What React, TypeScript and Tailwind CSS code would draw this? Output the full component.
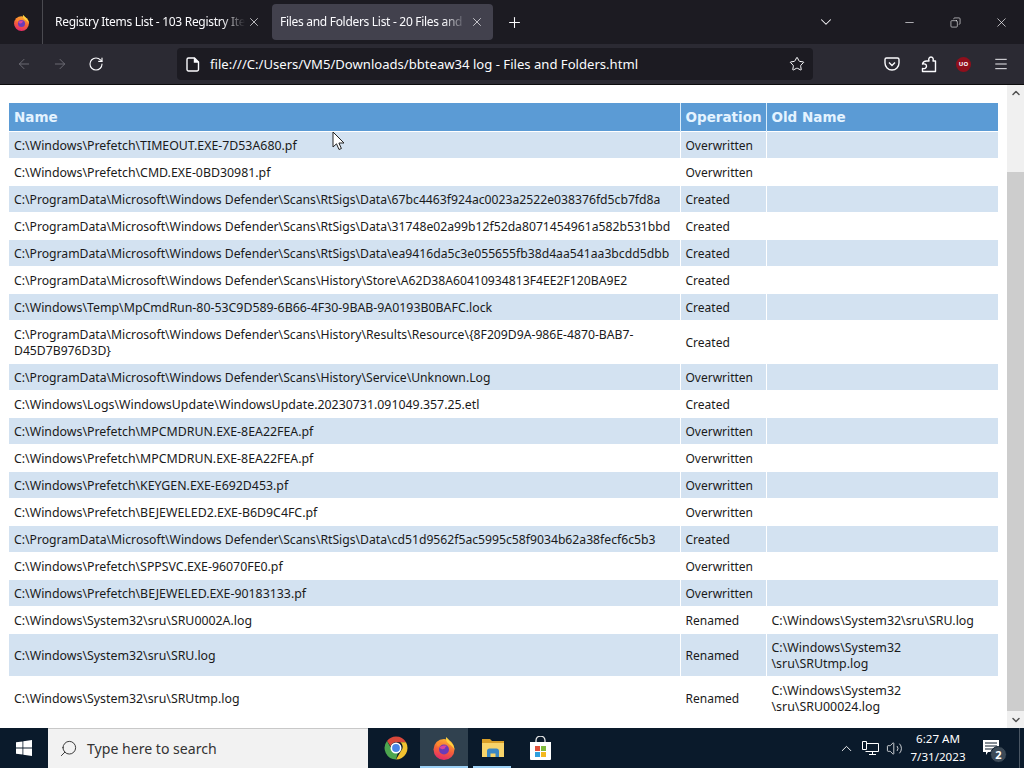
import { ArrowLeft, ArrowRight, ChevronDown, ChevronUp, Copy, Menu, Minus, Plus, RotateCw, Search, Star, Volume2, X } from "lucide-react";

const rows: [string, string, string][] = [
  ["C:\\Windows\\Prefetch\\TIMEOUT.EXE-7D53A680.pf", "Overwritten", ""],
  ["C:\\Windows\\Prefetch\\CMD.EXE-0BD30981.pf", "Overwritten", ""],
  ["C:\\ProgramData\\Microsoft\\Windows Defender\\Scans\\RtSigs\\Data\\67bc4463f924ac0023a2522e038376fd5cb7fd8a", "Created", ""],
  ["C:\\ProgramData\\Microsoft\\Windows Defender\\Scans\\RtSigs\\Data\\31748e02a99b12f52da8071454961a582b531bbd", "Created", ""],
  ["C:\\ProgramData\\Microsoft\\Windows Defender\\Scans\\RtSigs\\Data\\ea9416da5c3e055655fb38d4aa541aa3bcdd5dbb", "Created", ""],
  ["C:\\ProgramData\\Microsoft\\Windows Defender\\Scans\\History\\Store\\A62D38A60410934813F4EE2F120BA9E2", "Created", ""],
  ["C:\\Windows\\Temp\\MpCmdRun-80-53C9D589-6B66-4F30-9BAB-9A0193B0BAFC.lock", "Created", ""],
  ["C:\\ProgramData\\Microsoft\\Windows Defender\\Scans\\History\\Results\\Resource\\{8F209D9A-986E-4870-BAB7-\nD45D7B976D3D}", "Created", ""],
  ["C:\\ProgramData\\Microsoft\\Windows Defender\\Scans\\History\\Service\\Unknown.Log", "Overwritten", ""],
  ["C:\\Windows\\Logs\\WindowsUpdate\\WindowsUpdate.20230731.091049.357.25.etl", "Created", ""],
  ["C:\\Windows\\Prefetch\\MPCMDRUN.EXE-8EA22FEA.pf", "Overwritten", ""],
  ["C:\\Windows\\Prefetch\\MPCMDRUN.EXE-8EA22FEA.pf", "Overwritten", ""],
  ["C:\\Windows\\Prefetch\\KEYGEN.EXE-E692D453.pf", "Overwritten", ""],
  ["C:\\Windows\\Prefetch\\BEJEWELED2.EXE-B6D9C4FC.pf", "Overwritten", ""],
  ["C:\\ProgramData\\Microsoft\\Windows Defender\\Scans\\RtSigs\\Data\\cd51d9562f5ac5995c58f9034b62a38fecf6c5b3", "Created", ""],
  ["C:\\Windows\\Prefetch\\SPPSVC.EXE-96070FE0.pf", "Overwritten", ""],
  ["C:\\Windows\\Prefetch\\BEJEWELED.EXE-90183133.pf", "Overwritten", ""],
  ["C:\\Windows\\System32\\sru\\SRU0002A.log", "Renamed", "C:\\Windows\\System32\\sru\\SRU.log"],
  ["C:\\Windows\\System32\\sru\\SRU.log", "Renamed", "C:\\Windows\\System32\n\\sru\\SRUtmp.log"],
  ["C:\\Windows\\System32\\sru\\SRUtmp.log", "Renamed", "C:\\Windows\\System32\n\\sru\\SRU00024.log"],
];

function FirefoxLogo({ size }: { size: number }) {
  return (
    <svg width={size} height={size} viewBox="0 0 24 24">
      <defs>
        <linearGradient id="ffBody" x1="0.7" y1="0" x2="0.4" y2="1">
          <stop offset="0" stopColor="#ffb52e" />
          <stop offset="0.55" stopColor="#f4603a" />
          <stop offset="1" stopColor="#e4286a" />
        </linearGradient>
      </defs>
      <circle cx="12" cy="13.500" r="10.500" fill="url(#ffBody)" />
      <path d="M14 1c3 2.500 4 4 5 5.500 2 2 3.500 4.500 3.500 7-1.500-2.500-3-4-5-5-1.500-1.500-4-3-3.500-7.500z" fill="#ffd23f" />
      <path d="M5 5.500c1.500 1.500 3 2 5 2-2 1.500-3 2-4 3.500-1-1.500-1.500-3.500-1-5.500z" fill="#ff8a2b" />
      <circle cx="12" cy="13.500" r="5" fill="#6a3bb8" />
      <path d="M7.500 11.500c2-2 5-2.500 7.500-1.500-1.500.5-2 1.300-1.800 2.300l-2.200 1c-1.500 0-2.700-.7-3.500-1.800z" fill="#d9439d" />
    </svg>
  );
}

function App() {
  return (
    <div className="flex h-screen w-[1024px] flex-col overflow-hidden bg-white font-['Noto_Sans',sans-serif]">
      {/* Tab strip */}
      <div className="flex h-[44px] items-center bg-[#1c1b22] text-[#fbfbfe]">
        <div className="flex h-[44px] w-[43px] items-center justify-center border-r border-[#4a4a50]">
          <FirefoxLogo size={17} />
        </div>
        <div className="flex h-[36px] w-[229px] items-center pl-[12px] text-[12px]">
          <span className="w-[190px] overflow-hidden whitespace-nowrap tracking-[-0.3px] [mask-image:linear-gradient(to_right,black_88%,transparent)]">Registry Items List - 103 Registry Items</span>
          <X size={14} strokeWidth={1.2} className="ml-[2px]" />
        </div>
        <div className="flex h-[36px] w-[221px] items-center rounded-[4px] bg-[#42414d] pl-[8px] text-[12px]">
          <span className="w-[186px] overflow-hidden whitespace-nowrap tracking-[-0.3px] [mask-image:linear-gradient(to_right,black_88%,transparent)]">Files and Folders List - 20 Files and Folders</span>
          <X size={14} strokeWidth={1.2} className="ml-[4px]" />
        </div>
        <Plus size={17} strokeWidth={1.5} className="ml-[13px]" />
        <ChevronDown size={18} strokeWidth={1.4} className="ml-[294px]" />
        <Minus size={13} strokeWidth={1.2} className="ml-[68px]" />
        <Copy size={11} strokeWidth={1.3} className="ml-[34px] -scale-x-100" />
        <X size={15} strokeWidth={1.1} className="ml-[33px]" />
      </div>

      {/* Nav bar */}
      <div className="flex h-[41px] items-center border-b border-[#0c0c0d] bg-[#2b2a33] text-[#fbfbfe]">
        <ArrowLeft size={16} strokeWidth={1.4} className="ml-[16px] text-[#6f6e76]" />
        <ArrowRight size={16} strokeWidth={1.4} className="ml-[20px] text-[#6f6e76]" />
        <RotateCw size={16} strokeWidth={1.7} className="ml-[20px]" />
        <div className="ml-[73px] flex h-[32px] w-[636px] items-center rounded-[4px] bg-[#1c1b22] pl-[9px] text-[13.100px]">
          <svg width="14" height="15" viewBox="0 0 14 15" fill="none" stroke="currentColor" strokeWidth="1.400">
            <path d="M2.500 1h6l4 4v7.500a1.500 1.500 0 0 1-1.500 1.500H2.500A1.500 1.500 0 0 1 1 12.500v-10A1.500 1.500 0 0 1 2.500 1z" />
            <path d="M8.500 1v4h4" fill="currentColor" />
          </svg>
          <span className="ml-[10px] whitespace-nowrap pt-[1px]">file:///C:/Users/VM5/Downloads/bbteaw34 log - Files and Folders.html</span>
          <Star size={16} strokeWidth={1.5} className="ml-auto mr-[8px]" />
        </div>
        <svg width="16" height="16" viewBox="0 0 16 16" className="ml-[71px]" fill="none" stroke="#fbfbfe" strokeWidth="1.400">
          <path d="M2.500 2h11A1.500 1.500 0 0 1 15 3.500V7A7 7 0 0 1 1 7V3.500A1.500 1.500 0 0 1 2.500 2z" />
          <path d="M5 6.500l3 3 3-3" />
        </svg>
        <svg width="16" height="17" viewBox="0 0 16 17" className="ml-[21px]" fill="none" stroke="#fbfbfe" strokeWidth="1.400" strokeLinejoin="round">
          <path d="M5.500 5H8C7.300 3 8 1 10 1s2.700 2 2 4h2.500v10.500H1.500v-3c2 .5 4-.3 4-2.300S3.500 7.500 1.500 8c.5-2 2-3 4-3z" />
        </svg>
        <div className="ml-[19px] flex h-[15px] w-[15px] items-center justify-center rounded-full bg-[#8f0f1c] text-[6px] font-bold leading-none">
          UO
        </div>
        <Menu size={16} strokeWidth={1.4} className="ml-[22px]" />
      </div>

      {/* Page */}
      <div className="flex min-h-0 flex-1 bg-white">
        <div className="w-[1007px] pl-[9px] pt-[18px]">
          <table className="w-[989px] table-fixed border-collapse text-[12px] leading-[16px] text-[#1a1a1a]">
            <colgroup>
              <col className="w-[671px]" />
              <col className="w-[86px]" />
              <col className="w-[232px]" />
            </colgroup>
            <thead>
              <tr className="h-[28px] bg-[#5b9bd5] text-left font-['DejaVu_Sans',sans-serif] text-[13.500px] font-bold text-[#e4f3ff]">
                <th className="px-[5px] pt-[1px]">Name</th>
                <th className="whitespace-nowrap border-l border-[#d8ecfb] px-[5px] pt-[1px]">Operation</th>
                <th className="border-l border-[#d8ecfb] px-[5px] pt-[1px]">Old Name</th>
              </tr>
            </thead>
            <tbody>
              {rows.map((row, i) => (
                <tr key={i} className={`border-t border-white ${i % 2 === 0 ? "bg-[#d3e2f1]" : "bg-white"} ${row[0].includes("\n") || row[2].includes("\n") ? "h-[43px]" : "h-[27px]"}`}>
                  <td className={`whitespace-pre-line px-[5px] pt-[2px] ${row[0].startsWith("C:\\Windows") ? "text-[12.350px]" : "text-[12.200px]"}`}>{row[0]}</td>
                  <td className="border-l border-white px-[5px] pt-[2px]">{row[1]}</td>
                  <td className="whitespace-pre-line border-l border-white px-[5px] pt-[2px] text-[12.400px]">{row[2]}</td>
                </tr>
              ))}
            </tbody>
          </table>
        </div>

        {/* Scrollbar */}
        <div className="flex w-[17px] flex-col bg-[#f0f0f0] text-[#505050]">
          <div className="flex h-[17px] items-center justify-center">
            <ChevronUp size={12} strokeWidth={3} />
          </div>
          <div className="mt-[70px] h-[540px] bg-[#cdcdcd]" />
          <div className="mt-auto flex h-[17px] items-center justify-center">
            <ChevronDown size={12} strokeWidth={3} />
          </div>
        </div>
      </div>

      {/* Taskbar */}
      <div className="flex h-[40px] items-center bg-[#0a1a2b] text-white">
        <div className="flex w-[48px] justify-center">
          <svg width="16" height="16" viewBox="0 0 16 16" fill="#fff">
            <path d="M0 2.300l6.500-.9v6.200H0zM7.300 1.300 16 0v7.600H7.300zM0 8.400h6.500v6.200L0 13.700zM7.300 8.400H16V16l-8.700-1.200z" />
          </svg>
        </div>
        <div className="flex h-[40px] w-[320px] items-center border-t border-[#c8c8c8] bg-[#f2f2f2] pl-[11px] text-[14.100px] text-[#333]">
          <Search size={19} strokeWidth={1.2} className="-scale-x-100" />
          <span className="ml-[9px]">Type here to search</span>
        </div>
        <div className="ml-[4px] flex h-[40px] w-[48px] items-center justify-center">
          <svg width="24" height="24" viewBox="0 0 24 24">
            <path d="M12 .5a11.500 11.500 0 0 1 10 5.800H12a5.700 5.700 0 0 0-5.400 3.900L3 5A11.500 11.500 0 0 1 12 .5z" fill="#d9483b" />
            <path d="M22 6.300A11.500 11.500 0 0 1 12 23.500l5-8.500a5.700 5.700 0 0 0-.7-8.700z" fill="#f2c230" />
            <path d="M12 23.500A11.500 11.500 0 0 1 3 5l4.800 8.500a5.700 5.700 0 0 0 6 3.500z" fill="#4da64f" />
            <circle cx="12" cy="12" r="4.700" fill="#4a86e8" stroke="#fff" strokeWidth="1.600" />
          </svg>
        </div>
        <div className="relative flex h-[40px] w-[48px] items-center justify-center bg-[#30414f]">
          <FirefoxLogo size={24} />
          <div className="absolute inset-x-0 bottom-0 h-[2px] bg-[#9cd0f5]" />
        </div>
        <div className="relative flex h-[40px] w-[48px] items-center justify-center pl-[1px]">
          <svg width="22" height="20" viewBox="0 0 22 20">
            <path d="M0 1h8l2 2h12v5H0z" fill="#d99f28" />
            <path d="M0 5h22v14H0z" fill="#f8d46a" />
            <path d="M5 13c0-1.500 1-2.500 2.500-2.500h7c1.500 0 2.500 1 2.500 2.500v6h-3.500v-3.500h-5V19H5z" fill="#3b87c4" />
          </svg>
          <div className="absolute inset-x-[5px] bottom-0 h-[2px] bg-[#9cd0f5]" />
        </div>
        <div className="flex h-[40px] w-[48px] items-center justify-center">
          <svg width="23" height="25" viewBox="0 0 23 25">
            <path d="M7 7V4.500a4.500 4.500 0 0 1 9 0V7" fill="none" stroke="#e8e8e8" strokeWidth="1.300" />
            <path d="M1 6h21v17a1 1 0 0 1-1 1H2a1 1 0 0 1-1-1z" fill="#fff" />
            <path d="M6 10h5v5H6z" fill="#e0503a" />
            <path d="M12 10h5v5h-5z" fill="#7fba3a" />
            <path d="M6 16h5v5H6z" fill="#2fa0de" />
            <path d="M12 16h5v5h-5z" fill="#f4b81e" />
          </svg>
        </div>
        <ChevronUp size={17} strokeWidth={1.3} className="ml-[274px]" />
        <svg width="17" height="15" viewBox="0 0 17 15" className="ml-[7px]" fill="none" stroke="#fff" strokeWidth="1">
          <path d="M3.500 2.500h13v8h-13M7 13.500h7M10.500 10.500v3" />
          <path d="M.5.500h4v8h-4z" fill="#0a1a2b" />
        </svg>
        <Volume2 size={17} strokeWidth={1.1} className="ml-[7px]" />
        <div className="w-[70px] text-center text-[11.600px] leading-[18px]">
          <div>6:27 AM</div>
          <div>7/31/2023</div>
        </div>
        <div className="relative ml-[10px]">
          <svg width="16" height="16" viewBox="0 0 16 16">
            <path d="M0 0h16v12H5l-2 3v-3H0z" fill="#fff" />
            <path d="M2 3h12M2 6h12M2 9h8" stroke="#0a1a2b" strokeWidth="1" />
          </svg>
          <div className="absolute left-[7px] top-[6px] flex h-[17px] w-[17px] items-center justify-center rounded-full border border-[#0a1a2b] bg-[#3c4a57] text-[11px] font-bold leading-none">
            2
          </div>
        </div>
        <div className="ml-auto h-[40px] w-[5px] border-l border-[#4a5663]" />
      </div>

      {/* Mouse pointer */}
      <svg width="13" height="20" viewBox="0 0 13 20" className="absolute left-[332px] top-[131px]">
        <path d="M1 1v15l3.500-3.200 2.500 5.700 2.400-1-2.500-5.500H12z" fill="#fff" stroke="#222" strokeWidth="1" />
      </svg>
    </div>
  );
}

export default App;
